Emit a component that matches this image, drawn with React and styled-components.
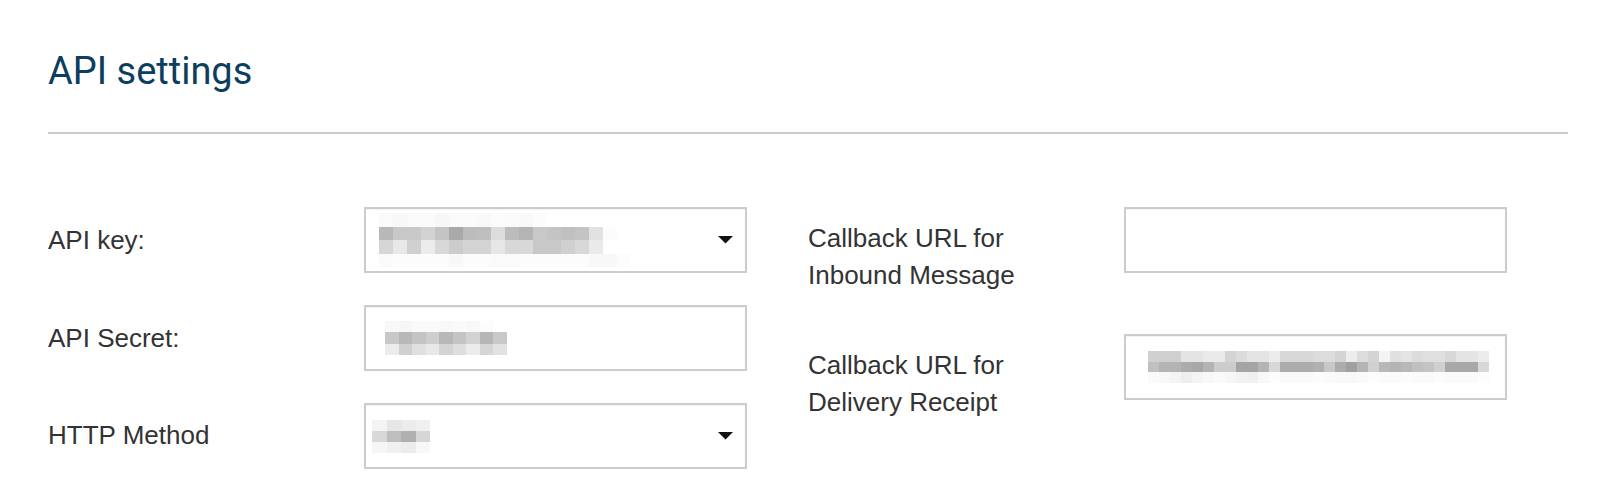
import React from 'react';
import styled, { createGlobalStyle } from 'styled-components';

const GlobalStyle = createGlobalStyle`
  body {
    margin: 0;
    background: #fff;
    font-family: "Liberation Sans", Arial, sans-serif;
  }
`;

const Page = styled.div`
  padding: 49px 32px 0 48px;
`;

const Title = styled.h2`
  margin: 0;
  font-family: Roboto, "Liberation Sans", sans-serif;
  font-weight: 400;
  font-size: 38px;
  line-height: 44px;
  color: #0c3e60;
`;

const Divider = styled.hr`
  margin: 39px 0 0;
  border: 0;
  border-top: 2px solid #cbcbcb;
`;

const Form = styled.div`
  display: grid;
  grid-template-columns: 760px 760px;
  margin-top: 73px;
`;

const Column = styled.div`
  display: flex;
  flex-direction: column;
  gap: ${p => p.$gap}px;
`;

const Field = styled.div`
  display: flex;
  align-items: flex-start;
`;

const Label = styled.label`
  flex: none;
  width: 316px;
  padding-top: ${p => p.$top}px;
  font-size: 26px;
  line-height: 37px;
  color: #333;
`;

const Box = styled.div`
  flex: none;
  box-sizing: border-box;
  width: 383px;
  height: 66px;
  border: 2px solid #cccccc;
  background: #fff;
  box-shadow: inset 0 1px 1px rgba(0, 0, 0, 0.05);
  display: flex;
  align-items: center;
  justify-content: space-between;
  padding: 0 12px 0 ${p => p.$pad}px;
`;

const Mosaic = styled.div`
  display: grid;
  grid-template-columns: repeat(${p => p.$cols}, ${p => p.$w}px);
  grid-auto-rows: ${p => p.$h}px;
  filter: blur(0.4px);
`;

const Cell = styled.span`
  display: block;
  background: ${p => p.$c};
`;

const Caret = () => (
  <svg width="15" height="8" viewBox="0 0 15 8">
    <polygon points="0,0 15,0 7.5,7.5" fill="#111" />
  </svg>
);

const apiKey = [
  'fa f8 fa fb f7 fa fb f9 fc fa f9 fc ff ff ff ff ff ff',
  'b8 c8 c8 d2 c4 a9 bc be dc bc b4 c8 c4 c0 c4 e2 fc ff',
  'd6 e8 d0 ec d8 cc d4 d4 e6 d8 d8 c8 c8 d0 d8 ea ff ff',
  'fa fc fc fc fc f8 fc fc fa fa fc fc fc fc fc f8 f8 fc',
];

const secret = [
  'f8 f6 fa fa f8 fa f8 fc ff',
  'c8 b8 c4 ce b8 c4 d2 b6 c8',
  'ec d0 e0 e8 d4 de ec d6 e2',
];

const method = [
  'f4 e6 ec f0',
  'd8 be b0 d6',
  'f6 f0 ec f8',
];

const delivery = [
  'd0 d0 d0 e4 e4 ea ea d4 dc e4 e4 ec d8 d8 d8 dc dc d4 ec dc d4 f4 e0 e4 dc e0 e0 d8 e4 e4 ec',
  'c0 b4 b4 ac a8 b4 cc cc a4 a4 b4 d8 ac ac ac b0 c8 ac a0 b4 d0 b8 b4 b8 c0 c4 d0 a8 a8 a8 d8',
  'fa f8 f4 ee f4 f8 fa f6 f2 f0 f8 fc fa fa fa fc fa f8 f8 fa fc fa fa fc fa fa fc fa fa fa fc',
];

const Blur = ({ rows, w, h }) => {
  const grid = rows.map(r => r.split(' '));
  return (
    <Mosaic $cols={grid[0].length} $w={w} $h={h}>
      {grid.flat().map((v, i) => (
        <Cell key={i} $c={`#${v}${v}${v}`} />
      ))}
    </Mosaic>
  );
};

export default function App() {
  return (
    <Page>
      <GlobalStyle />
      <Title>API settings</Title>
      <Divider />
      <Form>
        <Column $gap={32}>
          <Field>
            <Label $top={15}>API key:</Label>
            <Box $pad={13}>
              <Blur rows={apiKey} w={14} h={13.5} />
              <Caret />
            </Box>
          </Field>
          <Field>
            <Label $top={15}>API Secret:</Label>
            <Box $pad={19}>
              <Blur rows={secret} w={13.5} h={11.5} />
            </Box>
          </Field>
          <Field>
            <Label $top={14}>HTTP Method</Label>
            <Box $pad={6}>
              <Blur rows={method} w={14.5} h={11} />
              <Caret />
            </Box>
          </Field>
        </Column>
        <Column $gap={40}>
          <Field>
            <Label $top={13}>Callback URL for<br />Inbound Message</Label>
            <Box $pad={13} />
          </Field>
          <Field>
            <Label $top={13}>Callback URL for<br />Delivery Receipt</Label>
            <Box $pad={22}>
              <Blur rows={delivery} w={11} h={10.5} />
            </Box>
          </Field>
        </Column>
      </Form>
    </Page>
  );
}
